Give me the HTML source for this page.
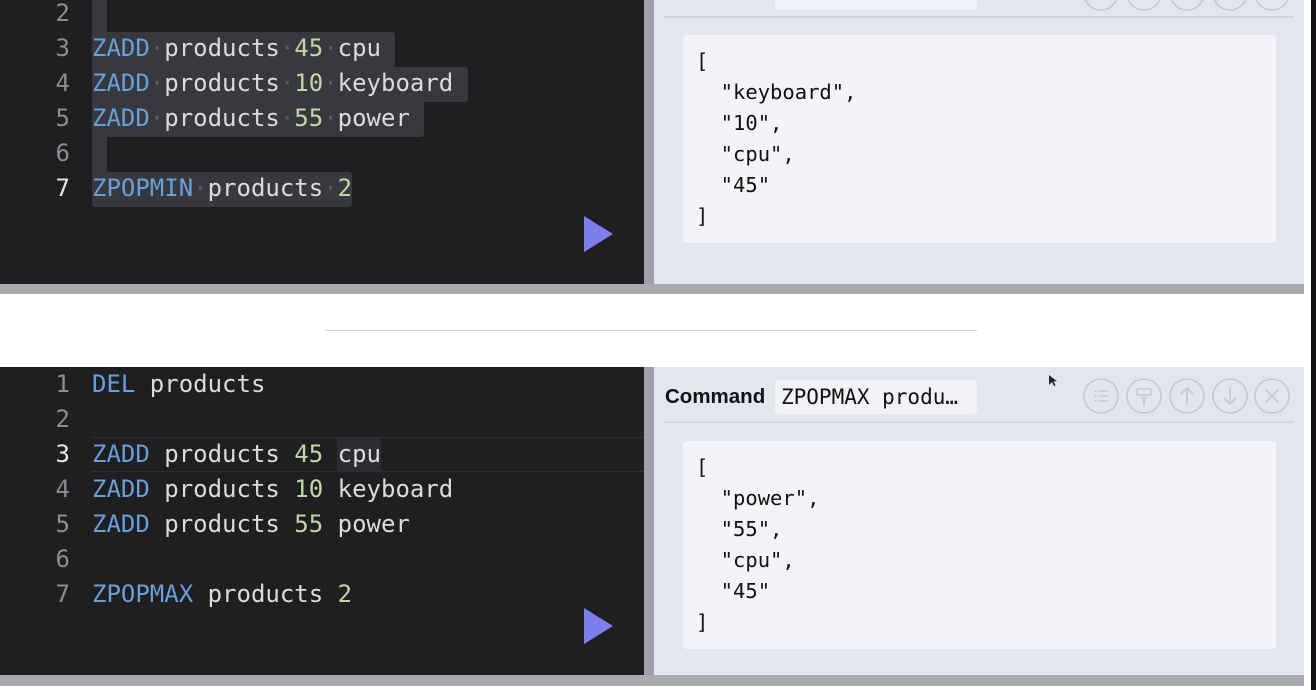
<!DOCTYPE html>
<html><head><meta charset="utf-8"><style>
*{margin:0;padding:0;box-sizing:border-box}
body{width:1316px;height:690px;overflow:hidden;background:#fff;position:relative;font-family:"Liberation Sans",sans-serif}
.abs{position:absolute}
.ed{background:#1f1e21;left:0;width:644px}
.div{background:#a0a1a8;left:644px;width:10px}
.pan{background:#e4e6ef;left:654px;width:650px}
.bar{background:#a8a9b1;left:0;width:1304px;height:10px}
.ln{position:absolute;left:0;width:70px;text-align:right;font:24px/35px "DejaVu Sans Mono",monospace;color:#8e8e92}
.code{position:absolute;left:92px;font:24px/35px "DejaVu Sans Mono",monospace;color:#dcdcdc;white-space:pre}
.k{color:#6b9fd9}.n{color:#c5d6a6}.d{color:#5c5d62}
.sel{position:absolute;background:#38393e}
.res{position:absolute;left:683px;width:593px;height:208px;background:#f3f3f8;border-radius:4px;font:20.5px/31px "DejaVu Sans Mono",monospace;color:#111;padding:11px 0 0 13px;white-space:pre}
.sep{position:absolute;left:664px;width:630px;height:2px;background:#d4d6df}
.inp{position:absolute;left:775px;width:202px;height:34px;background:#f2f2f7;border-radius:4px;font:21px/34px "DejaVu Sans Mono",monospace;padding-left:6px;color:#111;white-space:pre}
.play{position:absolute;width:0;height:0;border-top:18px solid transparent;border-bottom:18px solid transparent;border-left:29px solid #7d80ec}
</style></head><body>

<!-- TOP -->
<div class="abs ed" style="top:0;height:284px"></div>
<div class="abs div" style="top:0;height:284px"></div>
<div class="abs pan" style="top:0;height:284px"></div>
<div class="abs bar" style="top:284px"></div>

<div class="sel" style="left:92px;top:0;width:15px;height:32px"></div>
<div class="sel" style="left:92px;top:32px;width:303px;height:35px;border-radius:0 3px 0 0"></div>
<div class="sel" style="left:92px;top:67px;width:376px;height:35px;border-radius:0 3px 3px 0"></div>
<div class="sel" style="left:92px;top:102px;width:332px;height:35px;border-radius:0 0 3px 0"></div>
<div class="sel" style="left:92px;top:137px;width:15px;height:35px"></div>
<div class="sel" style="left:92px;top:172px;width:260px;height:35px;border-radius:0 3px 3px 3px"></div>

<div class="ln" style="top:-4px">2</div>
<div class="ln" style="top:31px">3</div>
<div class="ln" style="top:66px">4</div>
<div class="ln" style="top:101px">5</div>
<div class="ln" style="top:136px">6</div>
<div class="ln" style="top:171px;color:#e6e6e6">7</div>
<div class="code" style="top:31px"><span class="k">ZADD</span><span class="d">·</span>products<span class="d">·</span><span class="n">45</span><span class="d">·</span>cpu</div>
<div class="code" style="top:66px"><span class="k">ZADD</span><span class="d">·</span>products<span class="d">·</span><span class="n">10</span><span class="d">·</span>keyboard</div>
<div class="code" style="top:101px"><span class="k">ZADD</span><span class="d">·</span>products<span class="d">·</span><span class="n">55</span><span class="d">·</span>power</div>
<div class="code" style="top:171px"><span class="k">ZPOPMIN</span><span class="d">·</span>products<span class="d">·</span><span class="n">2</span></div>
<div class="play" style="left:584px;top:216px"></div>

<div class="inp" style="top:-24px"></div>
<svg class="abs" style="left:1080px;top:-25px" width="216" height="36"><g fill="none" stroke="#c7c8d0" stroke-width="1.6"><circle cx="21" cy="18" r="17"/><circle cx="64" cy="18" r="17"/><circle cx="107" cy="18" r="17"/><circle cx="150" cy="18" r="17"/><circle cx="192" cy="18" r="17"/></g></svg>
<div class="sep" style="top:16px"></div>
<div class="res" style="top:35px">[
  "keyboard",
  "10",
  "cpu",
  "45"
]</div>

<!-- divider -->
<div class="abs" style="left:325px;top:330px;width:652px;height:1px;background:#d2d2d6"></div>

<!-- BOTTOM -->
<div class="abs ed" style="top:367px;height:308px"></div>
<div class="abs div" style="top:367px;height:308px"></div>
<div class="abs pan" style="top:367px;height:308px"></div>
<div class="abs bar" style="top:675px;height:11px"></div>

<div class="abs" style="left:92px;top:437px;width:552px;height:35px;border-top:1px solid #2e2e33;border-bottom:1px solid #2e2e33"></div>
<div class="abs" style="left:337px;top:438px;width:44px;height:33px;background:#2c2c31"></div>

<div class="ln" style="top:367px">1</div>
<div class="ln" style="top:402px">2</div>
<div class="ln" style="top:437px;color:#e6e6e6">3</div>
<div class="ln" style="top:472px">4</div>
<div class="ln" style="top:507px">5</div>
<div class="ln" style="top:542px">6</div>
<div class="ln" style="top:577px">7</div>
<div class="code" style="top:367px"><span class="k">DEL</span> products</div>
<div class="code" style="top:437px"><span class="k">ZADD</span> products <span class="n">45</span> cpu</div>
<div class="code" style="top:472px"><span class="k">ZADD</span> products <span class="n">10</span> keyboard</div>
<div class="code" style="top:507px"><span class="k">ZADD</span> products <span class="n">55</span> power</div>
<div class="code" style="top:577px"><span class="k">ZPOPMAX</span> products <span class="n">2</span></div>
<div class="play" style="left:584px;top:608px"></div>

<div class="abs" style="left:665px;top:384px;font:bold 20.5px/26px 'Liberation Sans',sans-serif;color:#111">Command</div>
<div class="inp" style="top:380px">ZPOPMAX produ…</div>
<svg class="abs" style="left:1080px;top:378px" width="216" height="36"><g fill="none" stroke="#c7c8d0" stroke-width="1.6" stroke-linecap="round" stroke-linejoin="round"><circle cx="21" cy="18" r="17"/><circle cx="64" cy="18" r="17"/><circle cx="107" cy="18" r="17"/><circle cx="150" cy="18" r="17"/><circle cx="192" cy="18" r="17"/>
<path d="M15 13h1M19 13h9M15 18h1M19 18h9M15 23h1M19 23h9"/>
<path d="M57 11h14v6H57zM64 17v3M61 20h6M64 20v7"/>
<path d="M107 26V10M101 16l6-6 6 6"/>
<path d="M150 10v16M144 20l6 6 6-6"/>
<path d="M186 12l12 12M198 12l-12 12"/></g></svg>
<div class="sep" style="top:421px"></div>
<div class="res" style="top:441px">[
  "power",
  "55",
  "cpu",
  "45"
]</div>
<svg class="abs" style="left:1048px;top:374px" width="10" height="14"><path d="M1 1v10l3-3 2 4 1.5-.7-2-4H9z" fill="#222"/></svg>

<div class="abs" style="left:1311px;top:0;width:5px;height:690px;background:#111"></div>
</body></html>
